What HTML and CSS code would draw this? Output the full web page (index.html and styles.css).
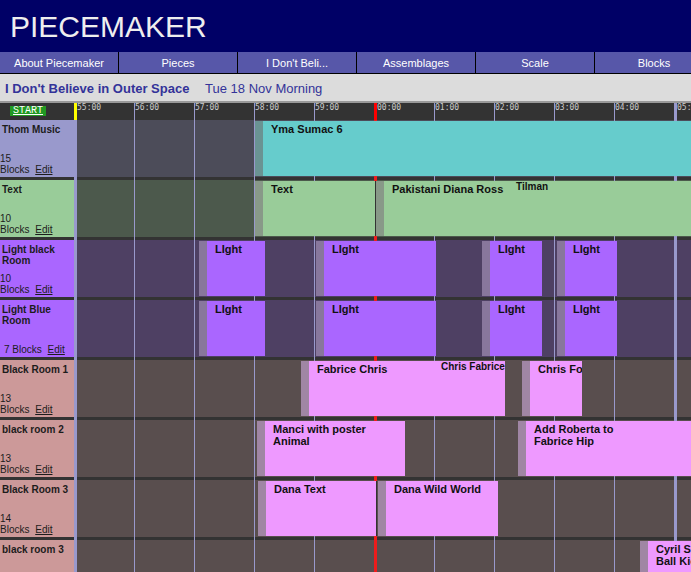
FILE: index.html
```html
<!DOCTYPE html>
<html lang="en">
<head>
    <meta charset="UTF-8">
    <title>Piecemaker - I Don't Believe in Outer Space</title>
    <link rel="stylesheet" href="styles.css">
</head>
<body>
    <header class="top">
        <h1 class="logo">PIECEMAKER</h1>
        <nav class="menu">
            <a href="#">About Piecemaker</a>
            <a href="#">Pieces</a>
            <a href="#">I Don't Beli...</a>
            <a href="#">Assemblages</a>
            <a href="#">Scale</a>
            <a href="#">Blocks</a>
        </nav>
    </header>

    <div class="titlebar">
        <span class="piece">I Don't Believe in Outer Space</span>
        <span class="when">Tue 18 Nov Morning</span>
    </div>

    <div class="board">
        <!-- time ruler -->
        <div class="ruler">
            <div class="ruler-left"><a href="#" class="start">START</a></div>
            <div class="tick first">55:00</div>
            <div class="tick">56:00</div>
            <div class="tick">57:00</div>
            <div class="tick">58:00</div>
            <div class="tick">59:00</div>
            <div class="tick now">00:00</div>
            <div class="tick">01:00</div>
            <div class="tick">02:00</div>
            <div class="tick">03:00</div>
            <div class="tick">04:00</div>
            <div class="tick mark">05:00</div>
        </div>

        <div class="rows">
            <!-- minute lines, placed by time -->
            <div class="gridline wide" style="left:74px"></div>
            <div class="gridline" style="left:134px"></div>
            <div class="gridline" style="left:194px"></div>
            <div class="gridline" style="left:254px"></div>
            <div class="gridline" style="left:314px"></div>
            <div class="gridline wide now" style="left:374px"></div>
            <div class="gridline" style="left:434px"></div>
            <div class="gridline" style="left:494px"></div>
            <div class="gridline" style="left:554px"></div>
            <div class="gridline" style="left:614px"></div>
            <div class="gridline wide" style="left:674px"></div>

            <div class="row music">
                <div class="label">
                    <b class="name">Thom Music</b>
                    <div class="count">15<br>Blocks <a href="#">Edit</a></div>
                </div>
                <div class="track">
                    <div class="block teal" style="left:178px;width:460px"><span class="title">Yma Sumac 6</span></div>
                </div>
            </div>

            <div class="row text">
                <div class="label">
                    <b class="name">Text</b>
                    <div class="count">10<br>Blocks <a href="#">Edit</a></div>
                </div>
                <div class="track">
                    <div class="block green edge" style="left:178px;width:121px"><span class="title">Text</span></div>
                    <div class="block green" style="left:299px;width:400px">
                        <span class="title">Pakistani Diana Ross</span>
                        <span class="sub">Tilman</span>
                    </div>
                </div>
            </div>

            <div class="row light">
                <div class="label">
                    <b class="name">Light black Room</b>
                    <div class="count">10<br>Blocks <a href="#">Edit</a></div>
                </div>
                <div class="track">
                    <div class="block purple" style="left:122px;width:66px"><span class="title">LIght</span></div>
                    <div class="block purple" style="left:239px;width:120px"><span class="title">LIght</span></div>
                    <div class="block purple" style="left:405px;width:60px"><span class="title">LIght</span></div>
                    <div class="block purple" style="left:480px;width:60px"><span class="title">LIght</span></div>
                </div>
            </div>

            <div class="row light">
                <div class="label">
                    <b class="name">Light Blue Room</b>
                    <div class="count single">7 Blocks <a href="#">Edit</a></div>
                </div>
                <div class="track">
                    <div class="block purple" style="left:122px;width:66px"><span class="title">LIght</span></div>
                    <div class="block purple" style="left:239px;width:120px"><span class="title">LIght</span></div>
                    <div class="block purple" style="left:405px;width:60px"><span class="title">LIght</span></div>
                    <div class="block purple" style="left:480px;width:60px"><span class="title">LIght</span></div>
                </div>
            </div>

            <div class="row room">
                <div class="label">
                    <b class="name">Black Room 1</b>
                    <div class="count">13<br>Blocks <a href="#">Edit</a></div>
                </div>
                <div class="track">
                    <div class="block pink" style="left:224px;width:204px">
                        <span class="title">Fabrice Chris</span>
                        <span class="sub">Chris Fabrice</span>
                    </div>
                    <div class="block pink" style="left:445px;width:60px"><span class="title">Chris Fox</span></div>
                </div>
            </div>

            <div class="row room">
                <div class="label">
                    <b class="name">black room 2</b>
                    <div class="count">13<br>Blocks <a href="#">Edit</a></div>
                </div>
                <div class="track">
                    <div class="block pink" style="left:180px;width:148px"><span class="title">Manci with poster Animal</span></div>
                    <div class="block pink" style="left:441px;width:300px"><span class="title">Add Roberta to Fabrice Hip</span></div>
                </div>
            </div>

            <div class="row room">
                <div class="label">
                    <b class="name">Black Room 3</b>
                    <div class="count">14<br>Blocks <a href="#">Edit</a></div>
                </div>
                <div class="track">
                    <div class="block pink edge" style="left:181px;width:119px"><span class="title">Dana Text</span></div>
                    <div class="block pink" style="left:301px;width:120px"><span class="title">Dana Wild World</span></div>
                </div>
            </div>

            <div class="row room">
                <div class="label">
                    <b class="name">black room 3</b>
                    <div class="count">9<br>Blocks <a href="#">Edit</a></div>
                </div>
                <div class="track">
                    <div class="block pink" style="left:563px;width:200px"><span class="title">Cyril Skateboarding Ball Kick</span></div>
                </div>
            </div>
        </div>
    </div>
</body>
</html>
```

FILE: styles.css
```css
body {
    margin: 0;
    padding: 0;
    font-family: "Liberation Sans", Arial, sans-serif;
    background-color: #333;
    overflow: hidden;
}

/* Header */
.top {
    background-color: #000066;
}

.logo {
    margin: 0;
    height: 42px;
    padding: 10px 0 0 10px;
    font-size: 30px;
    font-weight: normal;
    line-height: 34px;
    color: #eee;
}

.menu {
    display: flex;
    overflow: hidden;
    background-color: #5757a9;
    border-bottom: 1px solid #000;
}

.menu a {
    flex: 0 0 118px;
    height: 19px;
    padding-top: 2px;
    border-right: 1px solid #000;
    text-align: center;
    font-size: 11px;
    line-height: 19px;
    color: #fff;
    text-decoration: none;
}

.titlebar {
    height: 25px;
    padding: 2px 0 0 5px;
    background-color: #dcdcdc;
    border-bottom: 2px solid #999;
    font-size: 13px;
    line-height: 25px;
    color: #333399;
}

.piece {
    font-weight: bold;
}

.when {
    margin-left: 12px;
}

/* Time ruler */
.ruler {
    display: flex;
    height: 17px;
    overflow: hidden;
    background-color: #333;
}

.ruler-left {
    flex: 0 0 74px;
    display: flex;
    align-items: flex-start;
}

.start {
    margin: 3px 0 0 10px;
    height: 10px;
    padding: 0 3px;
    background-color: #229922;
    font-family: "Liberation Mono", monospace;
    font-size: 10px;
    line-height: 10px;
    color: #fff;
}

.tick {
    flex: 0 0 60px;
    box-sizing: border-box;
    border-left: 1px solid #9999cc;
    font-family: "DejaVu Sans Mono", monospace;
    font-size: 8px;
    line-height: 9px;
    color: #ccc;
}

.tick.first {
    border-left: 3px solid #ffff00;
}

.tick.now {
    border-left: 3px solid #ff0000;
}

.tick.mark {
    border-left: 3px solid #9999cc;
}

/* Rows */
.rows {
    position: relative;
}

.gridline {
    position: absolute;
    top: 0;
    bottom: 0;
    width: 1px;
    background-color: #9999cc;
    z-index: 1;
}

.gridline.wide {
    width: 3px;
}

.gridline.now {
    background-color: #ee1c1c;
}

.row {
    display: flex;
    height: 57px;
    margin-bottom: 3px;
}

.label {
    flex: 0 0 74px;
    box-sizing: border-box;
    display: flex;
    flex-direction: column;
    justify-content: space-between;
    padding: 4px 0 2px 0;
    color: #1c1c1c;
    line-height: 11px;
}

.name {
    padding-left: 2px;
    font-size: 10px;
}

.count {
    font-size: 10px;
}

.count.single {
    padding-left: 4px;
}

.count a {
    margin-left: 3px;
    color: #1c1c1c;
}

.track {
    flex: 1;
    position: relative;
    margin-left: 3px;
    overflow: hidden;
}

.music .label { background-color: #9999cc; }
.music .track { background-color: #4c4c59; }
.text .label { background-color: #99cc99; }
.text .track { background-color: #4c594c; }
.light .label { background-color: #aa66ff; }
.light .track { background-color: #4e4063; }
.room .label { background-color: #cc9999; }
.room .track { background-color: #594e4e; }

/* Blocks */
.block {
    position: absolute;
    top: 1px;
    height: 55px;
    box-sizing: border-box;
    padding: 2px 0 0 8px;
    border-left: 8px solid;
    overflow: hidden;
    z-index: 2;
}

.block.edge {
    border-right: 1px solid #333;
}

.title {
    display: block;
    width: 116px;
    font-size: 11px;
    font-weight: bold;
    line-height: 12px;
    color: #111;
}

.sub {
    position: absolute;
    top: 0;
    left: 132px;
    font-size: 10px;
    font-weight: bold;
    line-height: 12px;
    white-space: nowrap;
    color: #111;
}

.teal {
    background-color: #66cccc;
    border-left-color: #6a9393;
}

.green {
    background-color: #99cc99;
    border-left-color: #889988;
}

.purple {
    background-color: #aa66ff;
    border-left-color: #88779c;
}

.pink {
    background-color: #ee99ff;
    border-left-color: #a086a4;
}
```
